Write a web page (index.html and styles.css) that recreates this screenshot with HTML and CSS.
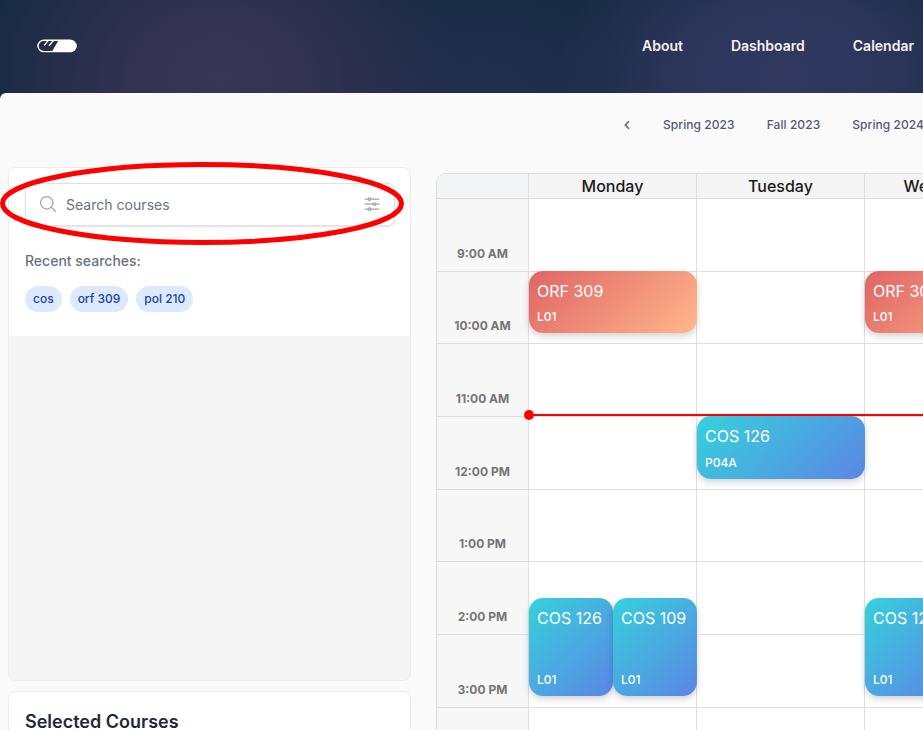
FILE: index.html
```html
<!DOCTYPE html>
<html lang="en">
<head>
<meta charset="utf-8">
<title>Calendar</title>
<link rel="stylesheet" href="styles.css">
</head>
<body>
<header class="topbar">
  <svg class="logo" width="40" height="14" viewBox="0 0 41 15" preserveAspectRatio="none">
    <rect x="1" y="1.3" width="39" height="12.2" rx="6.1" fill="none" stroke="#fff" stroke-width="1.5"/>
    <path d="M22.3 1H34a6.4 6.4 0 0 1 0 12.8H15z" fill="#fff"/>
    <path d="M11.4 1.8L7.4 6.8M16.8 1.8L12.2 7.4" stroke="#fff" stroke-width="1.5"/>
  </svg>
  <nav class="nav"><a>About</a><a>Dashboard</a><a>Calendar</a></nav>
</header>
<main class="page">
  <div class="terms">
    <svg class="chevron" width="8" height="10" viewBox="0 0 8 10"><path d="M6 1.3L2.3 5L6 8.7" fill="none" stroke="#62668a" stroke-width="1.6"/></svg>
    <span>Spring 2023</span><span>Fall 2023</span><span>Spring 2024</span>
  </div>
  <div class="columns">
    <aside class="sidebar">
      <section class="card search-card">
        <div class="search-top">
          <div class="search-box">
            <svg width="20" height="20" viewBox="0 0 24 24" fill="none" stroke="#9ca3af" stroke-width="1.5" stroke-linecap="round"><path d="M21 21l-5.2-5.2"/><circle cx="10.5" cy="10.5" r="7.5"/></svg>
            <span class="placeholder">Search courses</span>
            <svg width="20" height="20" viewBox="0 0 24 24" fill="none" stroke="#9ca3af" stroke-width="1.5" stroke-linecap="round"><path d="M10.5 6h9.75M10.5 6a1.5 1.5 0 1 1-3 0m3 0a1.5 1.5 0 1 0-3 0M3.75 6H7.5m3 12h9.75m-9.75 0a1.5 1.5 0 0 1-3 0m3 0a1.5 1.5 0 0 0-3 0m-3.75 0H7.5m9-6h3.75m-3.75 0a1.5 1.5 0 0 1-3 0m3 0a1.5 1.5 0 0 0-3 0m-9.75 0h9.75"/></svg>
          </div>
          <div class="recent">Recent searches:</div>
          <div class="chips"><span>cos</span><span>orf 309</span><span>pol 210</span></div>
        </div>
      </section>
      <section class="card selected"><h2>Selected Courses</h2></section>
    </aside>
    <section class="calendar">
      <div class="times">
        <div class="head corner"></div>
        <div class="slot">9:00 AM</div><div class="slot">10:00 AM</div><div class="slot">11:00 AM</div><div class="slot">12:00 PM</div><div class="slot">1:00 PM</div><div class="slot">2:00 PM</div><div class="slot">3:00 PM</div><div class="slot"></div>
      </div>
      <div class="day">
        <div class="head">Monday</div>
        <div class="slot"></div><div class="slot"></div><div class="slot"></div><div class="slot"></div><div class="slot"></div><div class="slot"></div><div class="slot"></div><div class="slot"></div>
        <div class="event warm at-ten"><b>ORF 309</b><i>L01</i></div>
        <div class="event cool at-half-two left"><b>COS 126</b><i>L01</i></div>
        <div class="event cool at-half-two right"><b>COS 109</b><i>L01</i></div>
      </div>
      <div class="day">
        <div class="head">Tuesday</div>
        <div class="slot"></div><div class="slot"></div><div class="slot"></div><div class="slot"></div><div class="slot"></div><div class="slot"></div><div class="slot"></div><div class="slot"></div>
        <div class="event cool at-noon"><b>COS 126</b><i>P04A</i></div>
      </div>
      <div class="day">
        <div class="head">Wednesday</div>
        <div class="slot"></div><div class="slot"></div><div class="slot"></div><div class="slot"></div><div class="slot"></div><div class="slot"></div><div class="slot"></div><div class="slot"></div>
        <div class="event warm at-ten"><b>ORF 309</b><i>L01</i></div>
        <div class="event cool at-half-two left"><b>COS 126</b><i>L01</i></div>
      </div>
      <div class="now"></div>
    </section>
  </div>
</main>
<svg class="highlight" width="404" height="83" viewBox="0 0 404 83"><ellipse cx="202" cy="41.5" rx="199.5" ry="39" fill="none" stroke="#f00" stroke-width="5"/></svg>
</body>
</html>
```
FILE: styles.css
```css
* { box-sizing: border-box; }
body {
  margin: 0;
  width: 923px;
  height: 730px;
  overflow: hidden;
  position: relative;
  font-family: Inter, sans-serif;
  background: #192b45;
}
.topbar {
  height: 93px;
  display: flex;
  align-items: center;
  justify-content: space-between;
  padding: 0 9px 2px 37px;
  background:
    radial-gradient(ellipse 240px 190px at 220px 78px, #393655 0%, #333251 35%, rgba(51, 50, 81, 0) 100%),
    radial-gradient(ellipse 230px 160px at 785px 75px, #30385f 0%, #2c365b 45%, rgba(44, 54, 91, 0) 100%),
    radial-gradient(ellipse 170px 110px at 480px 93px, #222f50 0%, rgba(34, 47, 80, 0) 100%),
    #182a43;
}
.logo { display: block; }
.nav {
  display: flex;
  gap: 48px;
  font-size: 14px;
  line-height: 20px;
  font-weight: 600;
  color: #f6f2f3;
}
.page {
  height: 637px;
  background: #fafafa;
  border-radius: 6px 0 0 0;
  overflow: hidden;
}
.terms {
  height: 64px;
  padding: 0 0 1px 623px;
  display: flex;
  align-items: center;
  gap: 32px;
  white-space: nowrap;
  font-size: 12px;
  letter-spacing: 0.07px;
  font-weight: 500;
  color: #555976;
}
.chevron { flex: none; }
.columns { display: flex; align-items: flex-start; }
.sidebar {
  width: 403px;
  margin: 10px 0 0 8.4px;
  flex: none;
  display: flex;
  flex-direction: column;
  gap: 9.5px;
}
.card {
  border: 1px solid #ececed;
  border-radius: 8px;
  overflow: hidden;
  background: #f5f5f5;
}
.search-card { height: 514px; }
.search-top { height: 168px; padding: 15px 15px 0 15.6px; background: #fff; }
.search-box {
  height: 43px;
  width: 370px;
  display: flex;
  align-items: center;
  padding: 0 12px;
  border: 1px solid #dfe1e6;
  border-radius: 7px;
  box-shadow: 0 1px 2px rgba(0, 0, 0, 0.12);
}
.search-box svg { margin-top: -1px; }
.placeholder {
  flex: 1;
  margin-left: 8px;
  font-size: 14px;
  letter-spacing: 0.03px;
  color: #6b7280;
}
.recent {
  margin-top: 25px;
  line-height: 20px;
  font-size: 14px;
  font-weight: 500;
  color: #6b7280;
}
.chips { display: flex; gap: 8px; margin-top: 15.3px; }
.chips span {
  height: 26px;
  padding: 0 8px;
  border-radius: 13px;
  line-height: 25.6px;
  font-size: 12px;
  font-weight: 500;
  color: #1e40af;
  background: #dbeafe;
}
.selected { height: 80px; background: #fff; }
.selected h2 {
  margin: 19px 15.6px;
  font-size: 18px;
  line-height: 22px;
  font-weight: 600;
  color: #1f2937;
}
.calendar {
  flex: none;
  margin: 16px 0 0 24.6px;
  position: relative;
  display: grid;
  grid-template-columns: 92px repeat(3, 168px);
  border: 1px solid #dcdcdc;
  border-radius: 10px 0 0 0;
  background: #fff;
}
.head {
  height: 25px;
  border-bottom: 1px solid #dcdcdc;
  background: #f4f4f4;
  line-height: 24px;
  font-size: 16px;
  font-weight: 500;
  text-align: center;
  color: #1a1a1a;
}
.times { background: #f7f7f7; border-right: 1px solid #e0e0e0; border-radius: 9px 0 0 0; }
.corner { background: #f2f4f6; border-radius: 9px 0 0 0; }
.slot { height: 72.66px; border-bottom: 1px solid #dedede; }
.times .slot {
  display: flex;
  align-items: flex-end;
  justify-content: center;
  padding-bottom: 10.1px;
  line-height: 15px;
  font-size: 12px;
  font-weight: 700;
  color: #757575;
}
.day { position: relative; border-right: 1px solid #dedede; }
.event {
  position: absolute;
  left: 0;
  width: 168px;
  height: 62.5px;
  padding: 10px 8px 9px;
  border-radius: 14px;
  display: flex;
  flex-direction: column;
  justify-content: space-between;
  color: #fff;
  box-shadow: 0 3px 7px rgba(0, 0, 0, 0.18);
}
.event b { font-size: 16px; line-height: 20px; font-weight: 400; white-space: nowrap; }
.event i { font-size: 12px; line-height: 15px; font-style: normal; font-weight: 500; }
.warm { background: linear-gradient(135deg, #e06464, #ffb88c); }
.cool { background: linear-gradient(135deg, #36d1dc, #5b86e5); }
.at-ten { top: 96.6px; }
.at-noon { top: 242px; }
.at-half-two { top: 423.6px; height: 98.3px; }
.left, .right { width: 84px; }
.right { left: 84px; }
.now {
  position: absolute;
  left: 92px;
  right: 0;
  top: 240px;
  height: 2px;
  background: #f00;
}
.now::before {
  content: "";
  position: absolute;
  left: -5px;
  top: -4px;
  width: 10px;
  height: 10px;
  border-radius: 50%;
  background: #f00;
}
.highlight { position: absolute; left: 0; top: 162px; }
```
